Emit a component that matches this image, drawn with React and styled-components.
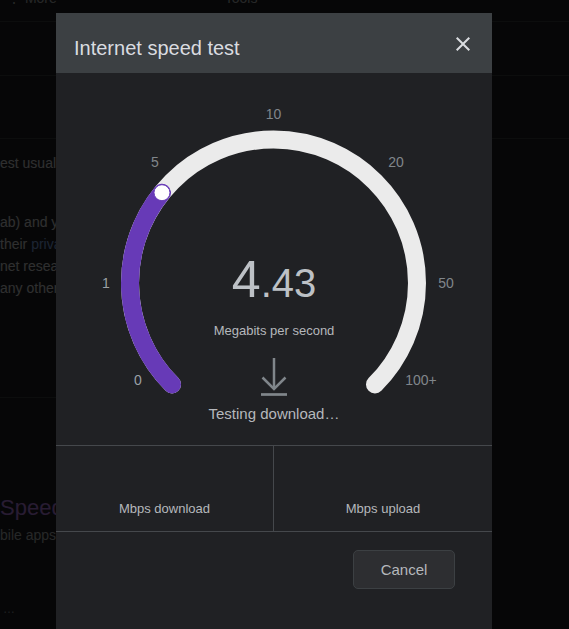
import React from "react";
import styled, { createGlobalStyle } from "styled-components";

const GlobalStyle = createGlobalStyle`
  html, body {
    margin: 0;
    padding: 0;
  }
  body {
    background: #202124;
    font-family: "Liberation Sans", Arial, sans-serif;
    overflow: hidden;
  }
`;

/* ---------- page behind the dialog ---------- */

const Page = styled.div`
  width: 569px;
  height: 629px;
  overflow: hidden;
  color: #e8eaed;
  display: flex;
  flex-direction: column;
`;

const NavRow = styled.div`
  height: 21px;
  flex: none;
  border-bottom: 1px solid #3c4043;
  display: flex;
  gap: 168px;
  padding-left: 7px;
  font-size: 14px;
  line-height: 16px;
  color: #bdc1c6;
`;

const NavItem = styled.span`
  margin-top: -10px;
`;

const Band = styled.div`
  height: ${(p) => p.$h}px;
  flex: none;
  border-bottom: 1px solid #3c4043;
`;

/* the part of the page left of the dialog; the rest is hidden under it */
const Strip = styled.div`
  width: 56px;
  overflow: hidden;
  white-space: nowrap;
`;

const Article = styled.div`
  height: 245px;
  padding-top: 13px;
  border-bottom: 1px solid #3c4043;
  font-size: 14px;
  line-height: 22px;
  color: #e8eaed;
`;

const Para = styled.p`
  margin: 0 0 ${(p) => p.$gap || 0}px;
`;

const Link = styled.span`
  color: #8ab4f8;
`;

const PromoTitle = styled.div`
  margin-top: 97px;
  font-size: 22px;
  line-height: 26px;
  color: #c58af9;
`;

const PromoText = styled.div`
  margin-top: 4px;
  font-size: 14px;
  line-height: 20px;
  color: #bdc1c6;
`;

const PromoMore = styled.div`
  margin-top: 57px;
  padding-left: 3px;
  font-size: 12px;
  color: #9aa0a6;
`;

const Scrim = styled.div`
  position: fixed;
  inset: 0;
  background: rgba(0, 0, 0, 0.8);
`;

/* ---------- dialog ---------- */

const Dialog = styled.div`
  position: fixed;
  left: 56px;
  top: 13px;
  width: 436px;
  bottom: -40px;
  background: #202124;
  display: flex;
  flex-direction: column;
`;

const Header = styled.div`
  height: 60px;
  flex: none;
  box-sizing: border-box;
  padding: 10px 17px 0 18px;
  background: #3c4043;
  display: flex;
  align-items: center;
  justify-content: space-between;
`;

const Title = styled.h2`
  margin: 0;
  font-size: 20px;
  line-height: 24px;
  font-weight: 400;
  color: #dadce0;
`;

const CloseButton = styled.button`
  width: 24px;
  height: 24px;
  margin-top: -9px;
  padding: 0;
  border: 0;
  background: none;
  color: #dadce0;
  display: flex;
  cursor: pointer;
`;

const GaugeArea = styled.div`
  position: relative;
  height: 372px;
  flex: none;
  display: flex;
  flex-direction: column;
  align-items: center;
  padding-top: 180px;
  box-sizing: border-box;
`;

const GaugeSvg = styled.svg`
  position: absolute;
  left: 0;
  top: 0;
`;

const Tick = styled.span`
  position: absolute;
  transform: translate(-50%, -50%);
  font-size: 14px;
  line-height: 16px;
  color: ${(p) => (p.$passed ? "#9aa0a6" : "#80868b")};
`;

const Speed = styled.div`
  position: relative;
  display: flex;
  align-items: baseline;
  line-height: 52px;
  height: 52px;
  color: #bdc1c6;
`;

const SpeedInt = styled.span`
  font-size: 52px;
`;

const SpeedDec = styled.span`
  font-size: 40px;
`;

const Unit = styled.div`
  position: relative;
  margin-top: 18px;
  font-size: 13px;
  line-height: 16px;
  color: #b5b8bc;
`;

const ArrowIcon = styled.svg`
  position: relative;
  margin-top: 19px;
  display: block;
`;

const Status = styled.div`
  position: relative;
  margin-top: 9px;
  font-size: 15px;
  line-height: 18px;
  color: #b5b8bc;
`;

const Results = styled.div`
  display: grid;
  grid-template-columns: 217px 1fr;
  height: 85px;
  flex: none;
  border-top: 1px solid #45484c;
  border-bottom: 1px solid #45484c;
`;

const ResultCell = styled.div`
  display: flex;
  flex-direction: column;
  justify-content: flex-end;
  align-items: center;
  padding-bottom: 14px;
  border-left: ${(p) => (p.$divided ? "1px solid #45484c" : "0")};
  font-size: 13px;
  line-height: 16px;
  color: #b5b8bc;
`;

const Footer = styled.div`
  display: flex;
  justify-content: flex-end;
  padding: 18px 37px 0 0;
`;

const CancelButton = styled.button`
  width: 102px;
  height: 39px;
  padding: 0;
  border: 1px solid #3c4043;
  border-radius: 5px;
  background: #2d2e31;
  font-family: "Liberation Sans", Arial, sans-serif;
  font-size: 15px;
  color: #b5b8bc;
  cursor: pointer;
`;

/* ---------- gauge geometry ---------- */

const CX = 217.5;
const CY = 210;
const R = 143.5;
const START = 135;
const SWEEP = 270;
const progress = 84 / 270;

const pt = (deg) => {
  const a = (deg * Math.PI) / 180;
  return [CX + R * Math.cos(a), CY + R * Math.sin(a)];
};

const arc = (from, to) => {
  const [x1, y1] = pt(from);
  const [x2, y2] = pt(to);
  const large = to - from > 180 ? 1 : 0;
  return `M ${x1} ${y1} A ${R} ${R} 0 ${large} 1 ${x2} ${y2}`;
};

const ticks = [
  { label: "0", x: 82, y: 307, passed: true },
  { label: "1", x: 50, y: 210, passed: true },
  { label: "5", x: 99, y: 89 },
  { label: "10", x: 217.5, y: 41 },
  { label: "20", x: 340, y: 89 },
  { label: "50", x: 390, y: 210 },
  { label: "100+", x: 365, y: 307 },
];

function Gauge() {
  const end = START + SWEEP * progress;
  const [dx, dy] = pt(end);
  return (
    <>
      <GaugeSvg width="436" height="372" viewBox="0 0 436 372">
        <path
          d={arc(START, START + SWEEP)}
          fill="none"
          stroke="#ebebeb"
          strokeWidth="18"
          strokeLinecap="round"
        />
        <path
          d={arc(START, end)}
          fill="none"
          stroke="#673ab7"
          strokeWidth="18"
          strokeLinecap="round"
        />
        <circle cx={dx} cy={dy} r="8" fill="#fff" stroke="#673ab7" strokeWidth="1" />
      </GaugeSvg>
      {ticks.map((t) => (
        <Tick key={t.label} $passed={t.passed} style={{ left: t.x, top: t.y }}>
          {t.label}
        </Tick>
      ))}
    </>
  );
}

export default function App() {
  return (
    <>
      <GlobalStyle />
      <Page>
        <NavRow>
          <NavItem>⋮ More</NavItem>
          <NavItem>Tools</NavItem>
        </NavRow>
        <Band $h={53} />
        <Band $h={62} />
        <Strip>
          <Article>
            <Para $gap={37}>est usually takes less than 30 seconds</Para>
            <Para>
              ab) and your IP address are shared with them
              <br />
              their <Link>privacy policy</Link>
              <br />
              net research and to improve the test
              <br />
              any other information
            </Para>
          </Article>
          <PromoTitle>Speedtest by Ookla</PromoTitle>
          <PromoText>bile apps for Android and iOS</PromoText>
          <PromoMore>…</PromoMore>
        </Strip>
      </Page>
      <Scrim />
      <Dialog role="dialog">
        <Header>
          <Title>Internet speed test</Title>
          <CloseButton aria-label="Close">
            <svg width="24" height="24" viewBox="0 0 24 24">
              <path
                d="M19 6.41 17.59 5 12 10.59 6.41 5 5 6.41 10.59 12 5 17.59 6.41 19 12 13.41 17.59 19 19 17.59 13.41 12z"
                fill="currentColor"
              />
            </svg>
          </CloseButton>
        </Header>
        <GaugeArea>
          <Gauge />
          <Speed>
            <SpeedInt>4</SpeedInt>
            <SpeedDec>.43</SpeedDec>
          </Speed>
          <Unit>Megabits per second</Unit>
          <ArrowIcon width="26" height="38" viewBox="0 0 26 38">
            <g stroke="#80868b" strokeWidth="2.5" fill="none">
              <line x1="13" y1="0" x2="13" y2="31" />
              <polyline points="1.5,19.5 13,31 24.5,19.5" />
              <line x1="0" y1="36.5" x2="26" y2="36.5" strokeWidth="2.7" />
            </g>
          </ArrowIcon>
          <Status>Testing download…</Status>
        </GaugeArea>
        <Results>
          <ResultCell>Mbps download</ResultCell>
          <ResultCell $divided>Mbps upload</ResultCell>
        </Results>
        <Footer>
          <CancelButton>Cancel</CancelButton>
        </Footer>
      </Dialog>
    </>
  );
}
